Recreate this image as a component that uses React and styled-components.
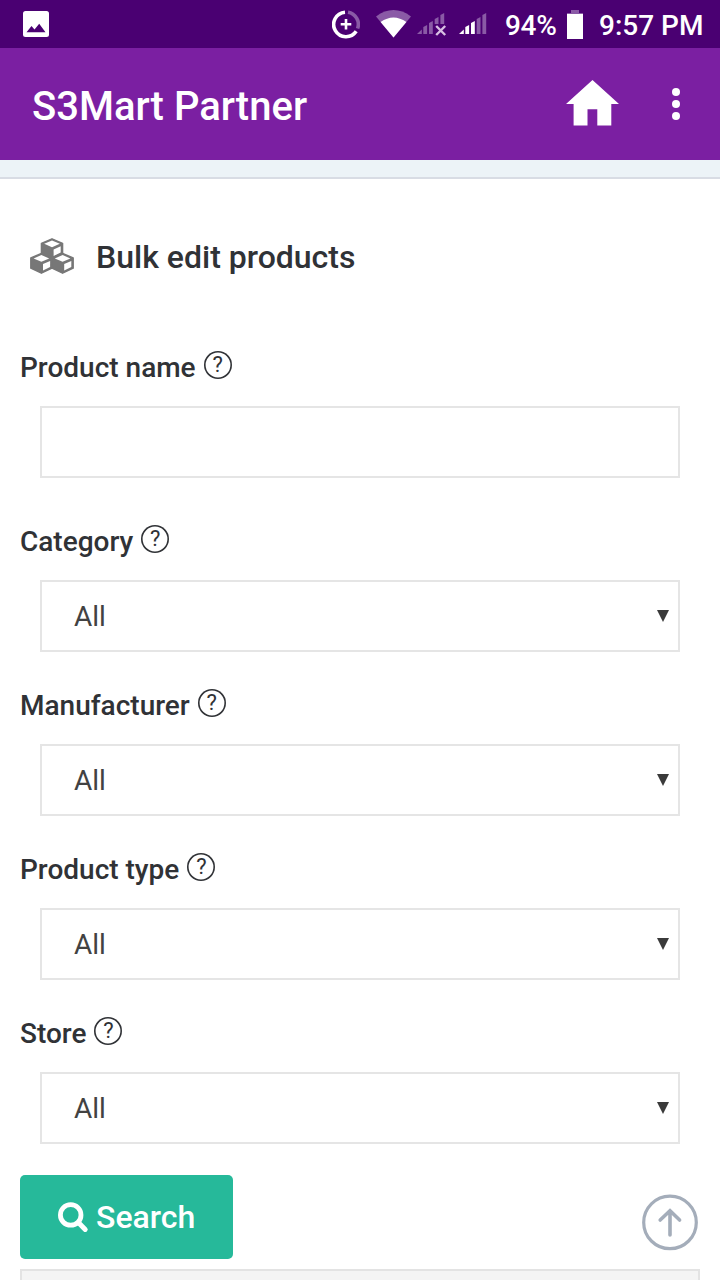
import React from 'react';
import styled, { createGlobalStyle } from 'styled-components';

const GlobalStyle = createGlobalStyle`
  * { box-sizing: border-box; }
  body {
    margin: 0;
    background: #fff;
    font-family: Roboto, "Noto Sans", sans-serif;
    color: #303236;
  }
`;

const Screen = styled.div`
  display: flex;
  flex-direction: column;
  width: 720px;
  height: 1280px;
  overflow: hidden;
  position: relative;
`;

const StatusBar = styled.div`
  flex: none;
  display: flex;
  align-items: center;
  height: 48px;
  padding: 0 17px 0 23px;
  background: #4a0072;
  color: #fff;
  font-size: 28px;
  font-weight: 500;
  line-height: 48px;
  white-space: nowrap;

  svg { display: block; flex: none; }
`;

const StatusIcons = styled.div`
  display: flex;
  align-items: center;
  height: 48px;
  margin-left: auto;
`;

const Gap = styled.span`
  width: ${props => props.size}px;
`;

const Percent = styled.span`
  width: 53px;
  margin: 3px 9px 0 18px;
  letter-spacing: -0.3px;
`;

const Clock = styled.span`
  width: 104px;
  margin: 3px 0 0 16px;
`;

const AppBar = styled.header`
  flex: none;
  display: flex;
  align-items: center;
  height: 112px;
  padding: 0 40px 0 32px;
  background: #7b1fa2;
  color: #fff;
`;

const AppTitle = styled.h1`
  flex: 1;
  margin: 5px 0 0;
  font-size: 40px;
  font-weight: 500;
  line-height: 47px;
`;

const MenuDots = styled.div`
  display: flex;
  flex-direction: column;
  gap: 4px;
  margin-left: 53px;

  i {
    width: 8px;
    height: 8px;
    border-radius: 50%;
    background: #fff;
  }
`;

const Strip = styled.div`
  flex: none;
  height: 19px;
  background: #ecf3f7;
  border-bottom: 2px solid #d8dce4;
`;

const Content = styled.main`
  display: flex;
  flex-direction: column;
  padding: 0 20px;
`;

const PageHeading = styled.div`
  display: flex;
  align-items: center;
  height: 48px;
  margin: 53px 0 67px;
  padding-left: 9px;

  h2 {
    margin: 1px 0 0 21px;
    font-size: 32px;
    font-weight: 500;
    line-height: 40px;
  }
`;

const Field = styled.div`
  margin-bottom: ${props => props.last ? '31px' : props.roomy ? '43px' : '33px'};
`;

const Label = styled.label`
  display: flex;
  align-items: center;
  height: 40px;
  margin-bottom: 19px;
  font-size: 28px;
  font-weight: 500;
  white-space: nowrap;
`;

const Help = styled.span`
  display: flex;
  align-items: center;
  justify-content: center;
  width: 28px;
  height: 28px;
  margin: -4px 0 0 8px;
  border-radius: 50%;
  box-shadow: inset 0 0 0 1.6px #303236;
  font-size: 22px;
  font-weight: 400;
  line-height: 28px;
`;

const Box = styled.div`
  display: flex;
  align-items: center;
  justify-content: space-between;
  height: 72px;
  margin: 0 20px;
  padding: 0 9px 0 32px;
  border: 2px solid #e5e5e5;
  font-size: 28px;
  color: #424242;

  svg { display: block; }
`;

const Value = styled.span`
  margin-top: 1px;
`;

const SearchButton = styled.button`
  display: flex;
  align-items: center;
  width: 213px;
  height: 84px;
  padding: 0 0 0 37px;
  border: 0;
  border-radius: 5px;
  background: #26b99a;
  color: #fff;
  font-family: inherit;
  font-size: 32px;
  font-weight: 500;

  svg { margin: 1px 7px 0 1px; }
`;

const ResultsPanel = styled.div`
  height: 40px;
  margin-top: 10px;
  border: 2px solid #e3e3e3;
  background: #f4f4f4;
`;

const ScrollTop = styled.div`
  position: absolute;
  left: 642px;
  top: 1194px;

  svg { display: block; }
`;

const PictureIcon = () => (
  <svg width="26" height="26" viewBox="0 0 26 26">
    <rect width="26" height="26" rx="2.5" fill="#fff" />
    <path d="M3.5 21.2 L8.5 15 L11.5 18.5 L16.2 12.7 L22.5 21.2 Z" fill="#4a0072" />
  </svg>
);

const DataSaverIcon = () => (
  <svg width="28" height="29" viewBox="0 0 28 29" fill="none" strokeWidth="3.6">
    <path d="M16 2.2 A12.3 12.3 0 0 1 25.6 18.5" stroke="#8a5aa6" />
    <path d="M13 2.2 A12.3 12.3 0 1 0 24.2 21.3" stroke="#fff" />
    <path d="M14 9 V19.6 M8.7 14.3 H19.3" stroke="#fff" strokeWidth="2.6" />
  </svg>
);

const WifiIcon = () => (
  <svg width="35" height="28" viewBox="0 0 35 28">
    <path d="M0 6.4 Q17.5 -6.4 35 6.4 L17.5 27.5 Z" fill="#8a5aa6" />
    <path d="M4.6 12 Q17.5 3 30.4 12 L17.5 27.5 Z" fill="#fff" />
  </svg>
);

const SignalIcon = ({ active, off }) => (
  <svg width={off ? 30 : 28} height="24" viewBox={off ? '0 0 30 24' : '0 0 28 24'}>
    {[5, 8, 12, 16, 20].map((h, i) => (
      <path
        key={h}
        d={i === 0 ? 'M0 22 L4.8 17.5 V22 Z' : `M${i * 5.7 + 0.6} ${22 - h + 1} L${i * 5.7 + 4.4} ${22 - h - 1} V${off && i > 2 ? 12 : 22} H${i * 5.7 + 0.6} Z`}
        fill={i < active ? '#fff' : '#8a5aa6'}
      />
    ))}
    {off && <path d="M19.2 14 L28.2 23 M28.2 14 L19.2 23" stroke="#d8bfe3" strokeWidth="2.4" />}
  </svg>
);

const BatteryIcon = () => (
  <svg width="16" height="29" viewBox="0 0 16 29">
    <path d="M4 0 H12 V3 H16 V5 H0 V3 H4 Z" fill="#8a5aa6" />
    <rect y="4" width="16" height="25" fill="#fff" />
  </svg>
);

const HomeIcon = () => (
  <svg width="53" height="48" viewBox="0 0 53 48">
    <path d="M26.5 0 L53 24 H45.3 V45.6 H31.3 V29.3 H21.5 V45.6 H7.6 V24 H0 Z" fill="#fff" />
  </svg>
);

// One cube with a light top and a light right face
const Cube = ({ x, y }) => (
  <g transform={`translate(${x} ${y})`}>
    <path d="M11 0 L21.6 4.5 V14.8 L11 19.8 L0.4 14.8 V4.5 Z" fill="#777" stroke="#777" strokeWidth="1.4" strokeLinejoin="round" />
    <path d="M11 1.6 L18.8 5 L11 8.4 L3.2 5 Z" fill="#fff" />
    <path d="M12.6 10.6 L19.7 7.5 V13.7 L12.6 17.1 Z" fill="#fff" />
  </g>
);

const CubesIcon = () => (
  <svg width="46" height="38" viewBox="0 0 46 38">
    <Cube x={12} y={1.8} />
    <Cube x={1.4} y={16.4} />
    <Cube x={22.6} y={16.4} />
  </svg>
);

const Caret = () => (
  <svg width="12" height="12" viewBox="0 0 12 12">
    <path d="M0 0 H12 L6 12 Z" fill="#3a3a3a" />
  </svg>
);

const SearchIcon = () => (
  <svg width="31" height="31" viewBox="0 0 31 31" fill="none" stroke="#fff">
    <circle cx="12.7" cy="12.9" r="10.3" strokeWidth="4.8" />
    <path d="M20.4 20.6 L27.2 27.4" strokeWidth="5" strokeLinecap="round" />
  </svg>
);

const ArrowUpIcon = () => (
  <svg width="56" height="57" viewBox="0 0 56 57" fill="none" stroke="#a4adba">
    <circle cx="28" cy="28.4" r="26.3" strokeWidth="3.2" />
    <path d="M28 41 V17 M18.2 26 L28 16.8 L37.6 26" strokeWidth="3.6" strokeLinecap="round" />
  </svg>
);

const fields = [
  { label: 'Product name' },
  { label: 'Category', value: 'All' },
  { label: 'Manufacturer', value: 'All' },
  { label: 'Product type', value: 'All' },
  { label: 'Store', value: 'All' },
];

class App extends React.Component {

  render() {
    return (
      <Screen>
        <GlobalStyle />

        <StatusBar>
          <PictureIcon />
          <StatusIcons>
            <DataSaverIcon />
            <Gap size={16} />
            <WifiIcon />
            <Gap size={6} />
            <SignalIcon active={0} off />
            <Gap size={12} />
            <SignalIcon active={3} />
            <Percent>94%</Percent>
            <BatteryIcon />
            <Clock>9:57 PM</Clock>
          </StatusIcons>
        </StatusBar>

        <AppBar>
          <AppTitle>S3Mart Partner</AppTitle>
          <HomeIcon />
          <MenuDots><i /><i /><i /></MenuDots>
        </AppBar>
        <Strip />

        <Content>
          <PageHeading>
            <CubesIcon />
            <h2>Bulk edit products</h2>
          </PageHeading>

          {fields.map((field, i) => (
            <Field key={field.label} roomy={!field.value} last={i === fields.length - 1}>
              <Label>{field.label}<Help>?</Help></Label>
              <Box>
                {field.value && <Value>{field.value}</Value>}
                {field.value && <Caret />}
              </Box>
            </Field>
          ))}

          <SearchButton><SearchIcon />Search</SearchButton>
          <ResultsPanel />
        </Content>

        <ScrollTop><ArrowUpIcon /></ScrollTop>
      </Screen>
    );
  }
}

export default App;
